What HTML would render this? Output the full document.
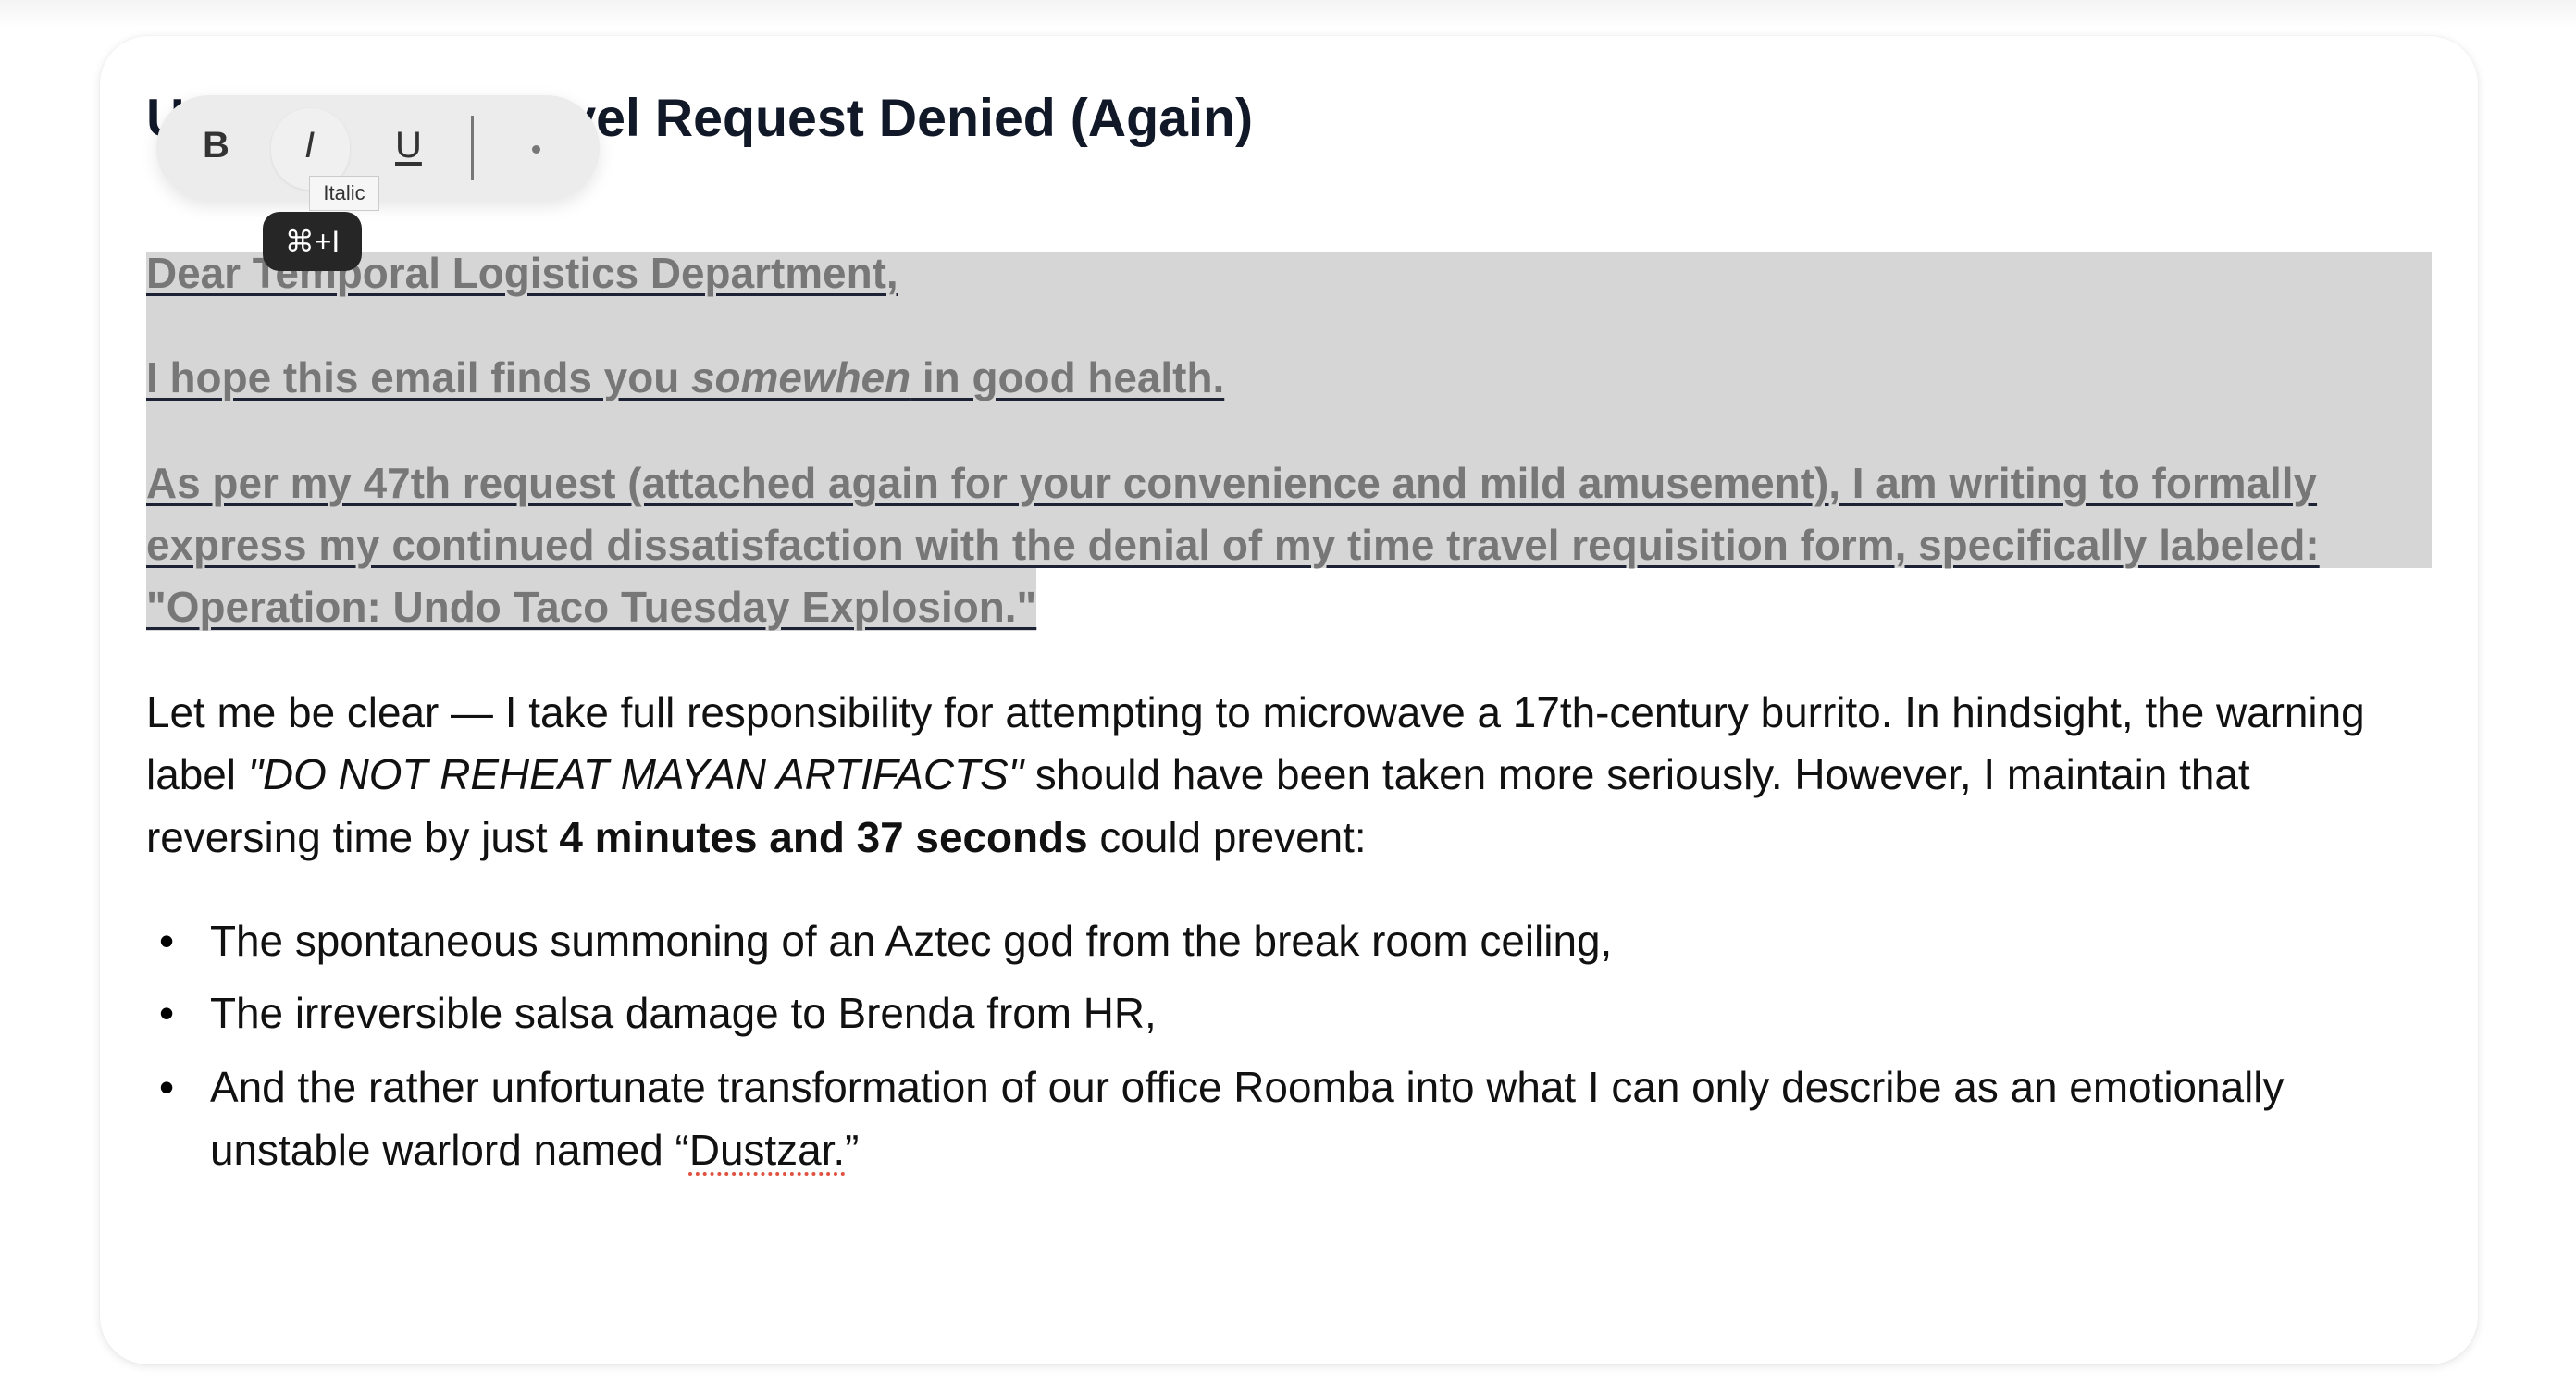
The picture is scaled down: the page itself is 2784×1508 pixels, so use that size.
<!DOCTYPE html>
<html><head><meta charset="utf-8"><style>
html,body{margin:0;padding:0;background:#fff;}
body{width:2784px;height:1508px;position:relative;overflow:hidden;font-family:"Liberation Sans",Arial,sans-serif;}
.top{position:absolute;left:0;top:0;width:2784px;height:30px;background:linear-gradient(#f4f4f4,#fff);}
.card{position:absolute;left:108px;top:39px;width:2570px;height:1436px;border-radius:52px;background:#fff;box-shadow:0 2px 10px rgba(0,0,0,.10),0 0 2px rgba(0,0,0,.06);}
.l{position:absolute;left:158px;white-space:nowrap;font-size:45.9px;color:#111;line-height:67px;}
.title{position:absolute;left:158px;top:92px;font-size:57.3px;font-weight:bold;color:#111827;white-space:nowrap;line-height:72px;}
.hl{position:absolute;background:#d6d6d6;}
.s{color:#777;font-weight:bold;text-decoration:underline;text-decoration-color:#1e2235;text-decoration-thickness:3px;text-underline-offset:6px;}
.b{position:absolute;left:172px;font-size:46px;line-height:67px;}
.tb{position:absolute;left:169px;top:103px;width:479px;height:114px;border-radius:57px;background:#ececec;box-shadow:0 6px 18px rgba(0,0,0,.10);}
.tb span{position:absolute;top:32px;font-size:40px;color:#333;}
.ipill{position:absolute;left:124px;top:14px;width:85px;height:88px;border-radius:42px;background:#f0f0f0;box-shadow:0 1px 3px rgba(0,0,0,.08);}
.tip{position:absolute;left:334px;top:190px;width:74px;height:36px;background:#f6f6f6;border:1px solid #ccc;font-size:22px;color:#333;text-align:center;line-height:36px;}
.kb{position:absolute;left:284px;top:229px;width:107px;height:64px;border-radius:18px;background:#262626;color:#fff;font-size:32px;text-align:center;line-height:64px;}
.sq{text-decoration:underline dotted #e0523f;text-decoration-thickness:4px;text-underline-offset:8px;}
</style></head><body>
<div class="top"></div>
<div class="card"></div>
<div class="title">Urgent: Time Travel Request Denied (Again)</div>

<div class="hl" style="left:158px;top:272px;width:2470px;height:342px;"></div>
<div class="hl" style="left:158px;top:614px;width:962px;height:68px;"></div>

<div class="l" style="top:262px"><span class="s">Dear Temporal Logistics Department,</span></div>
<div class="l" style="top:375px"><span class="s">I hope this email finds you <i>somewhen</i> in good health.</span></div>
<div class="l" style="top:489px"><span class="s">As per my 47th request (attached again for your convenience and mild amusement), I am writing to formally </span></div>
<div class="l" style="top:556px"><span class="s">express my continued dissatisfaction with the denial of my time travel requisition form, specifically labeled: </span></div>
<div class="l" style="top:623px"><span class="s">"Operation: Undo Taco Tuesday Explosion."</span></div>

<div class="l" style="top:737px">Let me be clear — I take full responsibility for attempting to microwave a 17th-century burrito. In hindsight, the warning</div>
<div class="l" style="top:804px">label <i>"DO NOT REHEAT MAYAN ARTIFACTS"</i> should have been taken more seriously. However, I maintain that</div>
<div class="l" style="top:872px">reversing time by just <b>4 minutes and 37 seconds</b> could prevent:</div>

<div class="b" style="top:984px">•</div>
<div class="l" style="left:227px;top:984px">The spontaneous summoning of an Aztec god from the break room ceiling,</div>
<div class="b" style="top:1062px">•</div>
<div class="l" style="left:227px;top:1062px">The irreversible salsa damage to Brenda from HR,</div>
<div class="b" style="top:1142px">•</div>
<div class="l" style="left:227px;top:1142px">And the rather unfortunate transformation of our office Roomba into what I can only describe as an emotionally</div>
<div class="l" style="left:227px;top:1210px">unstable warlord named “<span class="sq">Dustzar.</span>”</div>

<div class="tb">
  <div class="ipill"></div>
  <span style="left:50px;font-weight:bold;">B</span>
  <span style="left:160px;font-style:italic;">I</span>
  <span style="left:258px;text-decoration:underline;text-underline-offset:5px;">U</span>
  <div style="position:absolute;left:340px;top:22px;width:3px;height:70px;background:#777;"></div>
  <div style="position:absolute;left:406px;top:54px;width:9px;height:9px;border-radius:5px;background:#777;"></div>
</div>
<div class="tip">Italic</div>
<div class="kb">⌘+I</div>
</body></html>
